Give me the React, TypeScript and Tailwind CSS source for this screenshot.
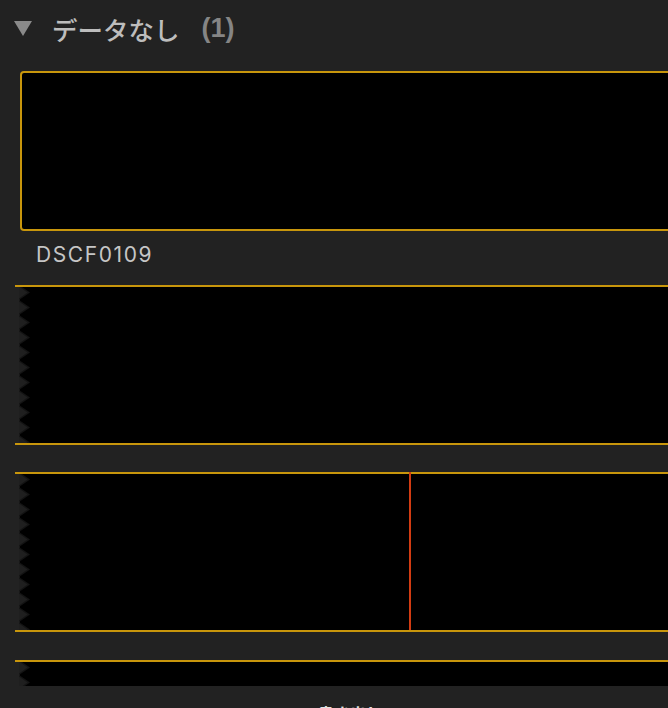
import React from "react";

const gold = "border-[#c8960c]";

function Teeth() {
  // sawtooth edge on the left side of each film strip
  const teeth = Array.from({ length: 11 }, (_, i) => i * 15 - 2);
  return (
    <svg width="15" height="156" className="block shrink-0" viewBox="0 0 15 156">
      <rect x="0" y="0" width="15" height="156" fill="#000" />
      <rect x="0" y="0" width="5" height="156" fill="#222" />
      {teeth.map((y) => (
        <polygon key={y} points={`4,${y} 15,${y + 7.5} 4,${y + 15}`} fill="#141414" />
      ))}
      {teeth.map((y) => (
        <polygon key={`b${y}`} points={`4,${y + 1.5} 12.5,${y + 7.5} 4,${y + 13.5}`} fill="#1f1f1f" />
      ))}
    </svg>
  );
}

function Strip({ playhead }: { playhead?: number }) {
  return (
    <div className={`ml-[15px] flex h-[160px] w-[720px] border-y-2 ${gold}`}>
      <Teeth />
      <div className="relative flex-1 bg-black">
        {playhead !== undefined && (
          <div
            className="absolute -top-[2px] bottom-0 w-[2px] bg-[#d23c12]"
            style={{ left: playhead }}
          />
        )}
      </div>
    </div>
  );
}

export default function App() {
  return (
    <div className="relative h-[708px] w-[668px] overflow-hidden bg-[#222222] font-['Liberation_Sans',sans-serif]">
      <div className="flex h-[57px] items-center pl-[14px]">
        <svg width="18" height="15" viewBox="0 0 18 15" className="block shrink-0">
          <polygon points="0,0 18,0 9,15" fill="#8a8a8a" />
        </svg>
        <span className="ml-[20px] font-['Noto_Sans_CJK_JP',sans-serif] text-[25.5px] font-medium leading-none text-[#bdbdbd]">
          データなし
        </span>
        <span className="ml-[22px] text-[27px] font-bold leading-none text-[#858585]">(1)</span>
      </div>

      <div className="mt-[14px] ml-[20px] h-[160px] w-[720px] rounded-[4px] border-2 border-[#c8960c] bg-black" />
      <div className="flex h-[54px] items-center pb-[6px] pl-[36px] font-['Inter',sans-serif] text-[21px] tracking-[1.6px] text-[#c6c6c6]">
        DSCF0109
      </div>

      <Strip />
      <div className="h-[27px]" />
      <Strip playhead={379} />
      <div className="h-[28px]" />
      <Strip />

      <div className="absolute bottom-0 left-0 right-0 h-[22px] bg-[#222222]">
        <div className="pl-[318px] pt-[19px] font-['Noto_Sans_CJK_JP',sans-serif] text-[16px] font-bold leading-none text-[#e0e0e0]">
          書き出し
        </div>
      </div>
    </div>
  );
}
